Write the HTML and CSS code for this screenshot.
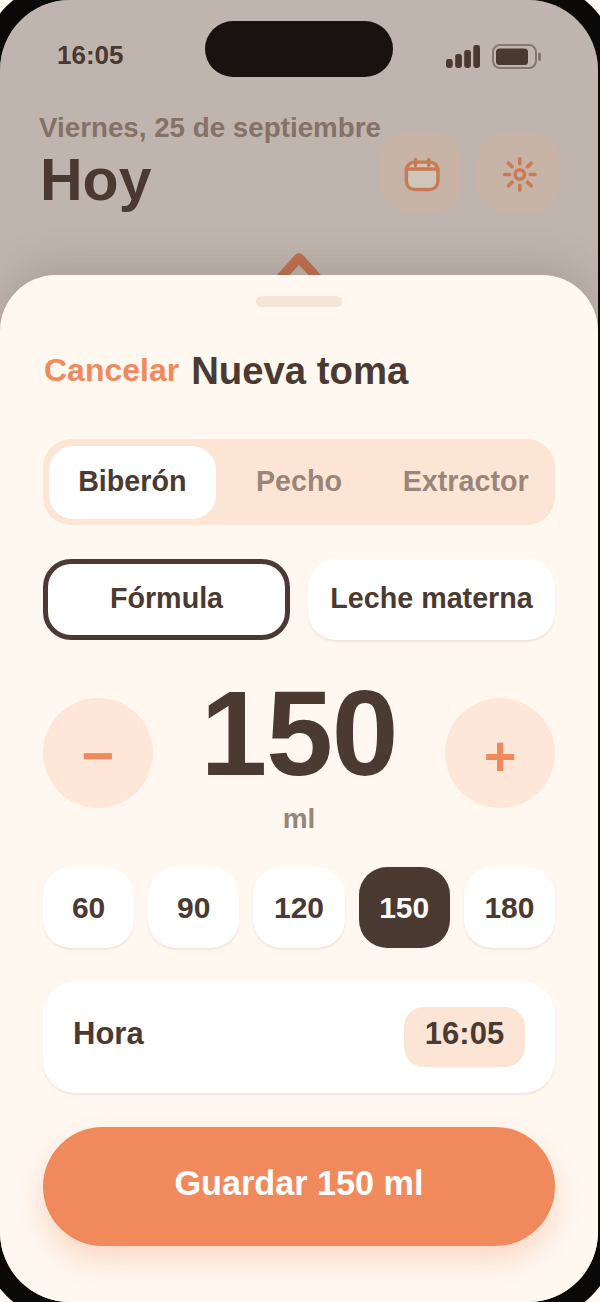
FILE: index.html
```html
<!DOCTYPE html>
<html lang="es">
<head>
<meta charset="utf-8">
<title>Nueva toma</title>
<link rel="stylesheet" href="styles.css">
</head>
<body>
<div class="phone">
  <div class="screen">
    <div class="status">
      <span class="clock">16:05</span>
      <div class="indicators">
        <svg class="signal" width="34" height="23" viewBox="0 0 34 23"><rect x="0" y="14" width="6.7" height="9" rx="2.4"/><rect x="9.2" y="9" width="6.7" height="14" rx="2.4"/><rect x="18.2" y="5" width="6.7" height="18" rx="2.4"/><rect x="27.3" y="0" width="6.7" height="23" rx="2.4"/></svg>
        <svg class="battery" width="49" height="25" viewBox="0 0 49 25"><rect x="1" y="1" width="43" height="23" rx="7" fill="none" stroke="#4a3a32" stroke-opacity=".5" stroke-width="2"/><rect x="4" y="4.5" width="32" height="16.5" rx="3.5" fill="#4a3a32"/><rect x="46" y="8.5" width="3.4" height="8.5" rx="1.7" fill="#4a3a32" fill-opacity=".5"/></svg>
      </div>
    </div>
    <div class="island"></div>
    <header class="head">
      <div class="titles">
        <div class="date">Viernes, 25 de septiembre</div>
        <h1 class="today">Hoy</h1>
      </div>
      <div class="actions">
        <div class="action">
          <svg class="glyph" width="36" height="36" viewBox="0 0 36 36" fill="none" stroke="#ca7a53" stroke-width="3.4" stroke-linecap="round"><rect x="3.4" y="7.1" width="31.5" height="27.4" rx="8" fill="#cfc5b9"/><path d="M3.4 14h31.5M12.5 4.4v6.1M25.8 4.4v6.1"/></svg>
        </div>
        <div class="action">
          <svg class="glyph" width="36" height="36" viewBox="0 0 36 36" fill="none" stroke="#ca7a53" stroke-width="3.6" stroke-linecap="round"><circle cx="18.8" cy="19.5" r="4.7"/><path d="M18.8 3.8v5M18.8 30.2v5M3.5 19.5h5M29.1 19.5h5M7.5 8.2l3.6 3.6M26.5 27.2l3.6 3.6M30.1 8.2l-3.6 3.6M11.1 27.2l-3.6 3.6"/></svg>
        </div>
      </div>
    </header>
    <svg class="chevron" width="60" height="28" viewBox="0 0 60 28" fill="#c2714f"><path d="M7 28 25 8Q29 4.200 33 8L51 28H38.500L29 18 19.500 28Z"/></svg>
    <div class="scrim"></div>
    <section class="sheet">
      <div class="handle"></div>
      <div class="sheet-head">
        <span class="cancel">Cancelar</span>
        <span class="sheet-title">Nueva toma</span>
      </div>
      <div class="segment">
        <div class="seg seg-on">Biberón</div>
        <div class="seg">Pecho</div>
        <div class="seg">Extractor</div>
      </div>
      <div class="kinds">
        <div class="kind kind-on">Fórmula</div>
        <div class="kind">Leche materna</div>
      </div>
      <div class="stepper">
        <div class="round">−</div>
        <div class="amount">
          <div class="number">150</div>
          <div class="unit">ml</div>
        </div>
        <div class="round">+</div>
      </div>
      <div class="presets">
        <div class="preset">60</div>
        <div class="preset">90</div>
        <div class="preset">120</div>
        <div class="preset preset-on">150</div>
        <div class="preset">180</div>
      </div>
      <div class="time-row">
        <span class="time-label">Hora</span>
        <span class="time-pill">16:05</span>
      </div>
      <div class="save">Guardar 150 ml</div>
    </section>
  </div>
</div>
</body>
</html>
```
FILE: styles.css
```css
* { box-sizing: border-box; }
html, body { margin: 0; padding: 0; }
body {
  width: 600px;
  height: 1302px;
  overflow: hidden;
  background: #fffaf5;
  font-family: "Liberation Sans", Arial, sans-serif;
  font-weight: 700;
  color: #4a3a32;
}
.phone {
  width: 638px;
  height: 1342px;
  margin: -20px 0 0 -20px;
  padding: 20px;
  background: #0c0a09;
  border-radius: 90px;
}
.screen {
  position: relative;
  width: 598px;
  height: 1302px;
  border-radius: 70px;
  overflow: hidden;
  background: #fff8f1;
}
.status {
  display: flex;
  justify-content: space-between;
  align-items: center;
  height: 32px;
  margin-top: 39px;
  padding: 0 57px;
}
.clock { font-size: 26px; }
.indicators { display: flex; align-items: center; gap: 12px; padding-top: 3px; }
.signal { fill: #4a3a32; }
.island {
  position: absolute;
  top: 21px;
  left: 205px;
  width: 188px;
  height: 56px;
  border-radius: 28px;
  background: #1a1210;
  z-index: 3;
}
.head {
  display: flex;
  justify-content: space-between;
  margin-top: 41px;
  padding: 0 39px;
}
.titles { flex: 1; min-width: 0; }
.date { font-size: 27.75px; line-height: 32px; color: #a39085; white-space: nowrap; }
.today { margin: 0 0 0 1px; font-size: 59px; line-height: 72px; }
.actions { display: flex; gap: 17px; margin-top: 20px; position: relative; z-index: 3; }
.action {
  display: flex;
  align-items: center;
  justify-content: center;
  width: 81px;
  height: 81px;
  border-radius: 28px;
  background: #c7b4a6;
}
.glyph { overflow: visible; }
.chevron { position: absolute; left: 270px; top: 247px; z-index: 3; }
.scrim {
  position: absolute;
  inset: 0;
  background: rgba(74, 58, 50, 0.35);
  z-index: 2;
}
.sheet {
  position: absolute;
  left: 0;
  right: 0;
  top: 275px;
  bottom: 0;
  z-index: 4;
  padding: 21px 43px 0;
  background: #fff8f1;
  border-radius: 56px 56px 0 0;
  box-shadow: 0 -10px 40px rgba(50, 35, 25, 0.15);
}
.handle {
  width: 86px;
  height: 11px;
  margin: 0 auto;
  border-radius: 6px;
  background: #f3e6d8;
}
.sheet-head {
  display: flex;
  align-items: center;
  gap: 12px;
  height: 44px;
  margin-top: 42px;
  padding-left: 1px;
}
.cancel { font-size: 32px; padding-bottom: 2px; color: #f08a5d; }
.sheet-title { font-size: 38.3px; }
.segment {
  display: flex;
  height: 86px;
  margin-top: 46px;
  padding: 7px 6px 6px;
  border-radius: 28px;
  background: #fde5d5;
}
.seg {
  flex: 1 1 0;
  display: flex;
  align-items: center;
  justify-content: center;
  padding-bottom: 2px;
  border-radius: 24px;
  font-size: 28.7px;
  color: #9a857a;
}
.seg-on { background: #fff; color: #4a3a32; }
.kinds {
  display: grid;
  grid-template-columns: 1fr 1fr;
  gap: 18px;
  margin-top: 34px;
}
.kind {
  display: flex;
  align-items: center;
  justify-content: center;
  height: 81px;
  padding-bottom: 2px;
  border-radius: 28px;
  background: #fff;
  font-size: 28.7px;
  white-space: nowrap;
  box-shadow: 0 2px 2px rgba(150, 100, 60, 0.12);
}
.kind-on { border: 5px solid #4a3a32; box-shadow: none; }
.stepper {
  display: flex;
  justify-content: space-between;
  align-items: flex-start;
  height: 110px;
  margin-top: 58px;
}
.round {
  display: flex;
  align-items: center;
  justify-content: center;
  width: 110px;
  height: 110px;
  padding-top: 5px;
  border-radius: 50%;
  background: #fee7d8;
  color: #f08a5d;
  font-size: 56px;
}
.amount { text-align: center; height: 110px; margin-top: -15px; }
.number { font-size: 120px; line-height: 100px; letter-spacing: -1px; }
.unit { font-size: 28px; line-height: 36px; margin-top: 18px; color: #9a857a; }
.presets { display: flex; gap: 14px; margin-top: 59px; }
.preset {
  flex: 1 1 0;
  display: flex;
  align-items: center;
  justify-content: center;
  height: 81px;
  border-radius: 28px;
  background: #fff;
  font-size: 30px;
  box-shadow: 0 2px 2px rgba(150, 100, 60, 0.12);
}
.preset-on { background: #4a3a32; color: #fff; box-shadow: none; }
.time-row {
  display: flex;
  justify-content: space-between;
  align-items: center;
  height: 111px;
  margin-top: 34px;
  padding: 0 30px;
  border-radius: 32px;
  background: #fff;
  box-shadow: 0 2px 2px rgba(150, 100, 60, 0.12);
}
.time-label { font-size: 31px; padding-bottom: 8px; }
.time-pill {
  display: flex;
  align-items: center;
  justify-content: center;
  width: 121px;
  height: 60px;
  margin-bottom: 1px;
  padding-bottom: 7px;
  border-radius: 20px;
  background: #fde5d5;
  font-size: 31px;
}
.save {
  display: flex;
  align-items: center;
  justify-content: center;
  height: 119px;
  margin-top: 34px;
  padding-bottom: 6px;
  border-radius: 60px;
  background: #f08a5d;
  color: #fff;
  font-size: 34.2px;
  box-shadow: 0 14px 30px rgba(240, 138, 93, 0.3);
}
```
